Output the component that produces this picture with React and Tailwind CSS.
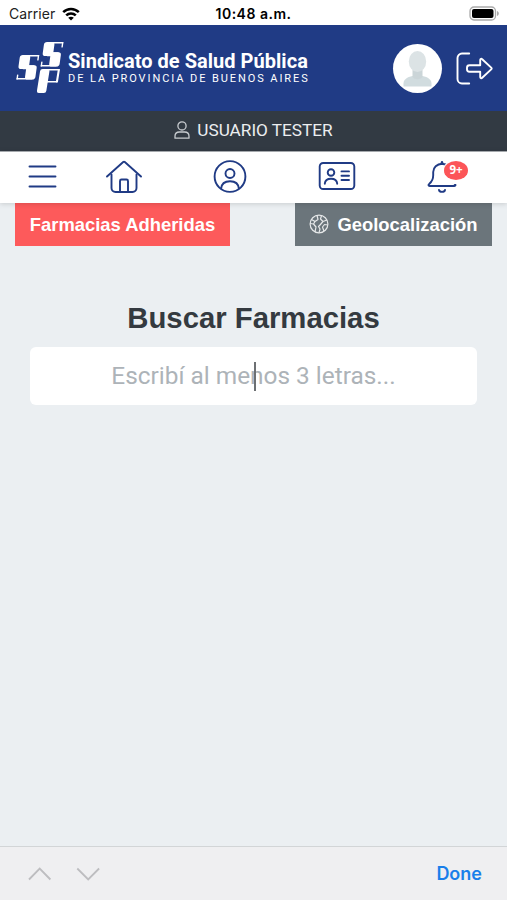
import React from "react";

const StatusBar = () => {
  return (
    <div className="h-[25px] shrink-0 grid grid-cols-3 items-center bg-white pt-[2px] px-[9px] text-black font-['Inter',sans-serif]">
      <div className="flex items-center gap-[7px]">
        <span className="text-[14px] leading-none tracking-[0.05px] text-[#222]">Carrier</span>
        <svg width="18" height="14" viewBox="0 0 18 14" fill="none" stroke="#000" strokeWidth="2.5">
          <path d="M1.2 5.2C5.6.9 12.4.9 16.8 5.2" />
          <path d="M4.2 8.4c2.7-2.7 6.9-2.7 9.6 0" />
          <path d="M9 13.6 6.2 10.7c1.6-1.4 4-1.4 5.6 0z" fill="#000" stroke="none" />
        </svg>
      </div>
      <span className="justify-self-center text-[14px] leading-none font-semibold tracking-[0.5px] whitespace-nowrap">10:48 a.m.</span>
      <svg className="justify-self-end -mr-[2px] -mt-px" width="31" height="15" viewBox="0 0 31 15">
        <rect x="1" y="1" width="25.5" height="13" rx="4" fill="#fff" stroke="#aaa" strokeWidth="1.3" />
        <rect x="3" y="3" width="21.5" height="9" rx="2" fill="#000" />
        <path d="M28 5c2.4.8 2.4 4.2 0 5z" fill="#aaa" />
      </svg>
    </div>
  );
};

// one block of the logo mark, used twice
const LogoBlock = ({ transform }) => (
  <g transform={transform}>
    <rect x="3" y="0" width="16.5" height="1.4" rx="0.6" />
    <rect x="18.1" y="0" width="1.4" height="5.5" rx="0.6" />
    <rect x="0.3" y="0" width="10.5" height="14" rx="2.8" />
    <rect x="5" y="10.3" width="11" height="3.9" />
    <rect x="8.3" y="10.3" width="10.4" height="14.2" rx="2.8" />
    <rect x="0" y="23.1" width="16" height="1.4" rx="0.6" />
    <rect x="0" y="19.5" width="1.4" height="5" rx="0.6" />
  </g>
);

const Logo = () => (
  <svg width="49" height="54" viewBox="0 0 49 54" fill="#fff">
    <LogoBlock transform="translate(29 1) skewX(-8)" />
    <LogoBlock transform="translate(4.8 14) skewX(-8)" />
    <g transform="translate(25.2 28) skewX(-9)">
      <rect x="0.2" y="0" width="9.4" height="24" rx="2.2" />
      <rect x="3" y="0" width="16.8" height="1.6" rx="0.8" />
      <rect x="17.7" y="0" width="2.1" height="13.5" rx="1" />
      <rect x="8" y="11.9" width="11.8" height="1.6" rx="0.8" />
    </g>
  </svg>
);

const Header = () => {
  return (
    <header className="h-[86px] shrink-0 flex items-center bg-[#203b85] pl-[15px] pr-[14px] text-white font-['Roboto',sans-serif]">
      <Logo />
      <div className="ml-[4px] pt-px flex flex-col whitespace-nowrap">
        <h1 className="text-[20px] leading-[20px] font-bold tracking-[0.03px]">Sindicato de Salud Pública</h1>
        <p className="text-[11px] leading-[15px] tracking-[1.92px]">DE LA PROVINCIA DE BUENOS AIRES</p>
      </div>
      <div className="ml-auto flex items-center gap-[14px]">
        <div className="size-[49px] rounded-full bg-white flex justify-center">
          <svg width="49" height="49" viewBox="0 0 49 49">
            <path d="M10.5 42.5v-3c0-4 3.500-6.500 9-7.500h10c5.500 1 9 3.500 9 7.500v3z" fill="#d1dcdf" />
            <path d="M19.5 26h10v7c-2 3-8 3-10 0z" fill="#cbd5d8" />
            <ellipse cx="24.5" cy="17.5" rx="8.7" ry="10.5" fill="#dce3e5" />
          </svg>
        </div>
        <svg width="37" height="33" viewBox="0 0 37 33" fill="none" stroke="#fff" strokeWidth="1.9" strokeLinecap="round" strokeLinejoin="round">
          <path d="M13.2 1.5H6A4.500 4.500 0 0 0 1.500 6v21A4.500 4.500 0 0 0 6 31.500h7.200" />
          <path d="M13.500 13.200h10.700V8.100c0-1.300 1.200-1.700 2-.9l9 8.400c.6.600.6 1.200 0 1.800l-9 8.400c-.8.800-2 .4-2-.9v-5.100H13.500a2.500 2.500 0 0 1-2.500-2.500v-1.600a2.500 2.500 0 0 1 2.500-2.500z" />
        </svg>
      </div>
    </header>
  );
};

const UserBar = () => (
  <div className="h-[40px] shrink-0 flex items-center justify-center gap-[7px] bg-[#323a43] text-[#eceef0] font-['Roboto',sans-serif]">
    <svg className="-mt-[2px]" width="16" height="18" viewBox="0 0 16 18" fill="none" stroke="#c8ccd0" strokeWidth="1.3">
      <circle cx="8" cy="4.9" r="4.1" />
      <path d="M1 17.2v-2C1 12.500 3 11 5.400 11h5.200c2.400 0 4.400 1.500 4.400 4.200v2z" strokeLinejoin="round" />
    </svg>
    <span className="text-[17.2px] leading-none whitespace-nowrap">USUARIO TESTER</span>
  </div>
);

const NavBar = () => {
  return (
    <nav className="h-[52px] shrink-0 relative flex items-center pb-[2px] bg-white border-t border-[#a5a9ad] shadow-[0_1px_5px_rgba(0,0,0,0.15)] text-[#203b85]">
      <svg className="ml-[28px]" width="29" height="36" viewBox="0 0 29 36" stroke="currentColor" strokeWidth="1.9" strokeLinecap="round">
        <path d="M1.500 7.500h26M1.500 17.500h26M1.500 27.500h26" />
      </svg>
      <svg className="ml-[49px]" width="36" height="36" viewBox="0 0 36 36" fill="none" stroke="currentColor" strokeWidth="1.9" strokeLinecap="round" strokeLinejoin="round">
        <path d="M1 17.500 17.200 3q.8-.7 1.600 0L35 17.500" />
        <path d="M5.500 15.500v13.500a4 4 0 0 0 4 4h17a4 4 0 0 0 4-4V15.500" />
        <path d="M14 32.500V22a1.500 1.500 0 0 1 1.500-1.500h5A1.500 1.500 0 0 1 22 22v10.500" />
      </svg>
      <svg className="ml-[70px]" width="36" height="36" viewBox="0 0 36 36" fill="none" stroke="currentColor" strokeWidth="1.9">
        <circle cx="18" cy="17.500" r="15.400" />
        <circle cx="18" cy="14.500" r="4.500" />
        <path d="M9 29.800c.5-5 4.200-7.600 9-7.600s8.500 2.600 9 7.600" />
      </svg>
      <svg className="ml-[70px]" width="38" height="36" viewBox="0 0 38 36" fill="none" stroke="currentColor" strokeWidth="1.9" strokeLinecap="round">
        <rect x="1.700" y="4" width="34.600" height="26" rx="3.500" />
        <circle cx="13" cy="13.500" r="3.300" />
        <path d="M6.800 24.700c.3-3.300 2.800-4.900 6.200-4.900s5.900 1.600 6.200 4.900" />
        <path d="M23.500 12.400h7.500M23.500 16.700h7.500M23.500 21h7.500" />
      </svg>
      <div className="relative ml-[70px]">
        <svg width="34" height="36" viewBox="0 0 34 36" fill="none" stroke="currentColor" strokeWidth="1.9" strokeLinecap="round" strokeLinejoin="round">
          <path d="M16 3.300v1.200" strokeWidth="2.400" />
          <path d="M16 4.700c-5 .3-8.800 3.800-8.800 8.300v3.300c0 4-1.300 6.300-3.800 8.400-1.500 1.200-1 2.300.3 2.300h24.600c1.300 0 1.800-1.100.3-2.300-2.500-2.100-3.800-4.400-3.800-8.400V13c0-4.500-3.800-8-8.800-8.300z" />
          <path d="M13 31c.5 2.500 5.500 2.500 6 0" />
        </svg>
        {/* white ring hides the bell behind the badge */}
        <span className="absolute left-[18px] top-[2px] w-[24px] h-[19px] rounded-[50%] bg-[#fc5558] shadow-[0_3px_0_1px_#fff,0_0_0_1px_#fff] flex items-center justify-center text-white text-[11.5px] leading-none font-bold font-['Open_Sans',sans-serif]">
          9+
        </span>
      </div>
    </nav>
  );
};

const Content = () => {
  return (
    <main className="flex-1 flex flex-col font-['Liberation_Sans',sans-serif]">
      <div className="flex justify-between px-[15px] text-white text-[18.4px] font-bold">
        <button className="w-[215px] h-[43px] flex items-center justify-center bg-[#fd5a5b] whitespace-nowrap">
          Farmacias Adheridas
        </button>
        <button className="w-[197px] h-[43px] flex items-center justify-center gap-[8px] bg-[#6b757b] whitespace-nowrap">
          <svg className="-mt-[2px]" width="20" height="20" viewBox="0 0 20 20" fill="none" stroke="#e6e8e9" strokeWidth="1.2" strokeLinejoin="round">
            <circle cx="10" cy="10" r="8.9" />
            <path d="M2.500 5.500 6 7.500l3-2-1-4M1.200 9.500l3.300.5 2.500 3-1 4.800M4.500 10 6 7.500M12.500 1.500l-1 3.500 2.500 2.500-3 3.500-1.500 1.500 1.500 2.500-1 3.700M14 7.500l4-1.500M18.800 11l-3.300-.5-2 2.500 1.500 4.300" />
          </svg>
          Geolocalización
        </button>
      </div>
      <section className="mt-[54px] px-[30px] flex flex-col items-center">
        <h2 className="text-[29.3px] leading-[36px] font-bold text-[#343a40]">Buscar Farmacias</h2>
        <div className="relative mt-[11px] h-[58px] w-full rounded-[6px] bg-white flex items-center justify-center">
          <span className="text-[24.4px] leading-none text-[#adb3b8] whitespace-nowrap font-['Roboto',sans-serif]">
            Escribí al menos 3 letras...
          </span>
          {/* text caret */}
          <span className="absolute left-[224px] top-[15px] h-[29px] w-[2px] bg-[#6d7073]" />
        </div>
      </section>
    </main>
  );
};

const KeyboardBar = () => (
  <footer className="h-[54px] shrink-0 flex items-center bg-[#efeff1] border-t border-[#d2d5d7] pl-[28px] pr-[25px]">
    <svg width="72" height="16" viewBox="0 0 72 16" fill="none" stroke="#bdbdc0" strokeWidth="1.8">
      <path d="m1 13.500 10.700-11 10.700 11M49.300 2.500l10.900 11 10.900-11" />
    </svg>
    <span className="ml-auto pt-px text-[18px] leading-none font-semibold text-[#1a7fea] font-['Inter',sans-serif]">Done</span>
  </footer>
);

const App = () => {
  return (
    <div className="w-[507px] h-[900px] overflow-hidden flex flex-col bg-[#ebeff2]">
      <StatusBar />
      <Header />
      <UserBar />
      <NavBar />
      <Content />
      <KeyboardBar />
    </div>
  );
};

export default App;
